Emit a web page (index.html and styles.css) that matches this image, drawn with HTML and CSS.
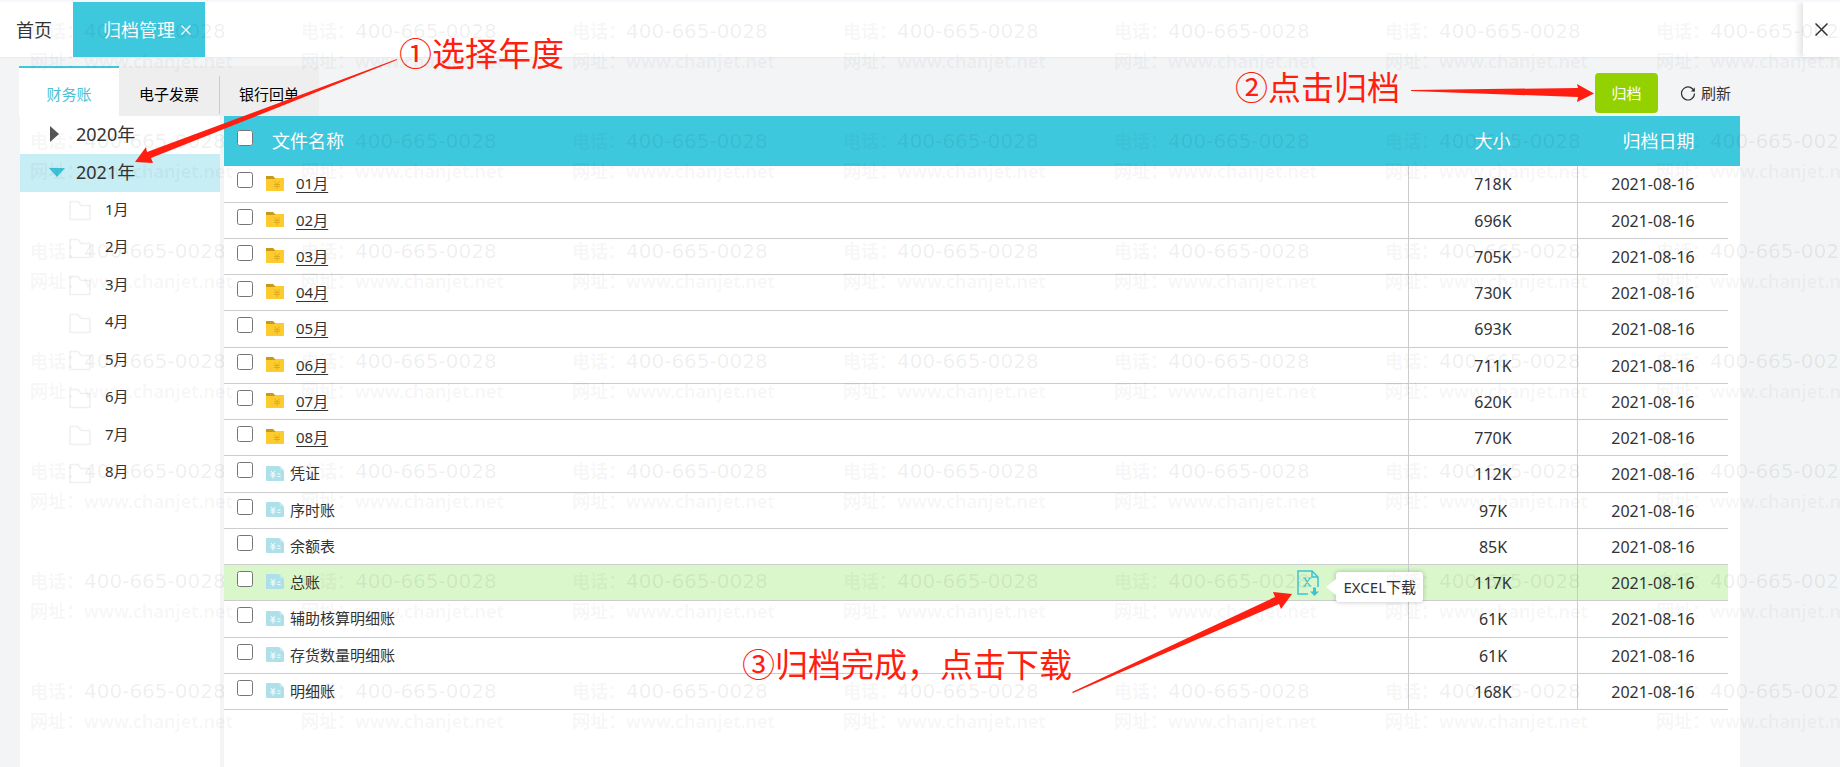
FILE: index.html
```
<!DOCTYPE html>
<html lang="zh-CN">
<head>
    <meta charset="UTF-8">
    <meta name="viewport" content="width=device-width, initial-scale=1.0">
    <title>归档管理</title>
    <link rel="stylesheet" href="styles.css">
</head>
<body>
    <!-- Icons -->
    <svg class="sprite" aria-hidden="true">
        <symbol id="icon-folder" viewBox="0 0 18 15">
            <path d="M0 0h7l2 2h8a1 1 0 0 1 1 1v4H0z" fill="#c79a1a"/>
            <path d="M0 3h8l2-1h7a1 1 0 0 1 1 1v11a1 1 0 0 1-1 1H1a1 1 0 0 1-1-1z" fill="#fdcb2e"/>
            <path d="M8.500 5.500l2.500 3 2.500-3M8 8.500h6M8 10.500h6M11 8v5" fill="none" stroke="#dba91f" stroke-width="0.900"/>
        </symbol>
        <symbol id="icon-file" viewBox="0 0 18 15">
            <path d="M1 0h12l5 5v9a1 1 0 0 1-1 1H1a1 1 0 0 1-1-1V1a1 1 0 0 1 1-1z" fill="#aee0ea"/>
            <path d="M14 0l4 4h-4z" fill="#c4eaf1"/>
            <path d="M5 5l2 2.500L9 5M4.500 8h5M4.500 10h5M7 7.500v5M11.500 8h3M11.500 10.500h3" fill="none" stroke="#fff" stroke-width="0.900"/>
        </symbol>
        <symbol id="icon-month" viewBox="0 0 22 21">
            <path d="M1 19.500v-18h8l3 4h9v14z" fill="none" stroke="#f0f0f0" stroke-width="1.500"/>
        </symbol>
    </svg>

    <!-- Top tabs -->
    <header class="topbar">
        <a class="home-tab" href="#">首页</a>
        <div class="page-tab">
            <span>归档管理</span>
            <button class="tab-close" type="button" aria-label="关闭标签">
                <svg width="10" height="10" viewBox="0 0 10 10"><path d="M0.500 0.500l9 9M9.500 0.500l-9 9" fill="none" stroke="#fff" stroke-width="1.200"/></svg>
            </button>
        </div>
        <button class="close-all" type="button" aria-label="关闭">
            <svg width="13" height="13" viewBox="0 0 13 13"><path d="M0.500 0.500l12 12M12.500 0.500l-12 12" fill="none" stroke="#333" stroke-width="1.500"/></svg>
        </button>
    </header>

    <div class="page">
        <div class="toolbar">
            <nav class="sub-tabs">
                <a class="sub-tab active" href="#">财务账</a>
                <a class="sub-tab" href="#">电子发票</a>
                <a class="sub-tab" href="#">银行回单</a>
            </nav>
            <div class="actions">
                <button class="archive-btn" type="button">归档</button>
                <button class="refresh-btn" type="button">
                    <svg width="16" height="16" viewBox="0 0 16 16">
                        <path d="M14.200 6.500A6.500 6.500 0 1 0 14.500 8.500" fill="none" stroke="#333" stroke-width="1.200"/>
                        <path d="M14.800 2.500v4h-4z" fill="#333"/>
                    </svg>
                    刷新
                </button>
            </div>
        </div>

        <div class="content">
            <!-- Year tree -->
            <aside class="sidebar">
                <div class="year">
                    <svg width="20" height="18" viewBox="0 0 20 18"><path d="M2 1l9 8-9 8z" fill="#555"/></svg>
                    2020年
                </div>
                <div class="year open">
                    <svg width="20" height="18" viewBox="0 0 20 18"><path d="M1 5h16l-8 9z" fill="#3dc2d6"/></svg>
                    2021年
                </div>
                <ul class="months" id="months"></ul>
            </aside>

            <main class="files">
                <table>
                    <colgroup>
                        <col>
                        <col class="col-size">
                        <col class="col-date">
                        <col class="col-scroll">
                    </colgroup>
                    <thead>
                        <tr>
                            <th class="name-head">
                                <div class="name">
                                    <input type="checkbox" aria-label="全选">
                                    <span>文件名称</span>
                                </div>
                            </th>
                            <th>大小</th>
                            <th colspan="2">归档日期</th>
                        </tr>
                    </thead>
                    <tbody id="rows"></tbody>
                </table>
            </main>
        </div>
    </div>

    <div class="watermark" id="watermark" aria-hidden="true"></div>

    <!-- Guide steps -->
    <div class="guide">
        <svg class="arrows" aria-hidden="true">
            <path d="M397 59L147 152l-1-5-11 15 18 1-2-5L397 60z"/>
            <path d="M1411 90l167-2-1-4 17 9.500-17 8.500 1-5-167-6z"/>
            <path d="M1072 692l203-95-2-5 19 2-11 15-2-5-206 89z"/>
        </svg>
        <p class="step step-year">①选择年度</p>
        <p class="step step-archive">②点击归档</p>
        <p class="step step-download">③归档完成，点击下载</p>
    </div>

    <script src="script.js"></script>
</body>
</html>
```
FILE: styles.css
```
* { box-sizing: border-box; margin: 0; padding: 0; }
body {
    display: flex; flex-direction: column; min-height: 100vh; position: relative; overflow-x: hidden;
    background: #f2f4f6; border-top: 2px solid #f6f7fd; color: #333;
    font-family: "Noto Sans", "Noto Sans CJK SC", sans-serif; font-size: 15px; line-height: 20px;
}
a { color: inherit; text-decoration: none; }
button { font: inherit; color: inherit; border: none; background: none; cursor: pointer; }
svg { display: block; flex: none; }
.sprite { position: absolute; width: 0; height: 0; }

/* Top bar */
.topbar { display: flex; height: 56px; background: #fff; border-bottom: 1px solid #e9ebed; font-size: 18px; }
.home-tab { display: flex; align-items: center; padding: 0 21px 0 16px; }
.page-tab { display: flex; align-items: center; gap: 6px; width: 132px; padding-left: 30px; background: #3ec8de; color: #fff; }
.close-all {
    display: flex; align-items: center; justify-content: center; width: 37px; margin-left: auto;
    box-shadow: -4px 0 6px rgba(0, 0, 0, 0.1); background: #fff;
}

/* Page */
.page { display: flex; flex-direction: column; flex: 1; padding: 8px 100px 0 19px; }
.toolbar { display: flex; justify-content: space-between; height: 50px; }
.sub-tabs { display: flex; background: #eee; }
.sub-tab {
    display: flex; align-items: center; justify-content: center; width: 100px; padding-top: 4px;
    border-top: 2px solid transparent; color: #000;
}
.sub-tab.active { background: #fff; border-top-color: #3ec8de; color: #4cc0d4; }
.sub-tab + .sub-tab + .sub-tab { background: linear-gradient(#ccc, #ccc) 0 8px / 1px 38px no-repeat; }

.actions { display: flex; align-items: center; gap: 22px; padding: 4px 9px 0 0; }
.archive-btn { width: 63px; height: 40px; border-radius: 4px; background: #94d100; color: #fff; }
.refresh-btn { display: flex; align-items: center; gap: 5px; }

/* Year tree */
.content { display: flex; flex: 1; gap: 4px; padding-left: 1px; }
.sidebar { width: 200px; background: #fff; }
.year { display: flex; align-items: center; gap: 8px; height: 38px; padding: 0 0 2px 28px; font-size: 18px; }
.year.open { background: #c7eef4; }
.months { display: grid; height: 300px; grid-auto-rows: 1fr; list-style: none; }
.months li { display: flex; align-items: center; gap: 14px; padding: 0 0 4px 49px; }
.months svg { margin-top: 4px; }

/* File list */
.files { flex: 1; min-width: 0; background: #fff; }
table { width: 100%; table-layout: fixed; border-collapse: separate; border-spacing: 0; }
.col-size { width: 169px; }
.col-date { width: 151px; }
.col-scroll { width: 12px; }
th { height: 50px; background: #3ec8de; color: #fff; font-size: 18px; font-weight: normal; text-align: center; }
td { height: 36px; border-bottom: 1px solid #ccc; text-align: center; }
tbody tr:nth-child(4n + 1) td { height: 37px; }
td + td { border-left: 1px solid #ccc; font-size: 16px; }
td:last-child { border: none; }
tr.current td { background: #d9f7cb; }
tr.current td:last-child { background: none; }
.name { display: flex; align-items: center; position: relative; padding: 0 0 2px 13px; }
.name input { width: 16px; height: 16px; margin-bottom: 6px; }
.name-head .name { padding-bottom: 0; }
.name-head span { margin-left: 19px; }
.name svg { margin-left: 13px; }
.name label { margin-left: 6px; }
.name a { margin-left: 12px; text-decoration: underline; text-underline-offset: 3px; }

/* Excel download */
.download { margin: 0 89px 0 auto; }
.name .download svg { margin: 4px 0 0; }
.tooltip {
    position: absolute; right: -15px; top: 50%; margin-top: -11px; padding: 5px 7px; z-index: 1;
    border-radius: 3px; background: #fff; box-shadow: 0 0 5px rgba(0, 0, 0, 0.25);
}
.tooltip::before {
    content: ""; position: absolute; left: -10px; top: 7px;
    border: 8px solid transparent; border-right: 10px solid #fff; border-left: none;
}

/* Contact watermark */
.watermark {
    position: absolute; inset: 14px 0 0 30px; z-index: 2; overflow: hidden; pointer-events: none;
    display: grid; grid-template-columns: repeat(7, 271px); grid-auto-rows: 110px;
    color: rgba(0, 0, 0, 0.05); font-size: 18px; font-weight: 600; line-height: 30px;
}
.phone { font-family: "DejaVu Sans", sans-serif; font-weight: normal; font-size: 20px; color: rgba(0, 0, 0, 0.07); }

/* Guide */
.guide { position: absolute; inset: -2px 0 0; z-index: 3; overflow: hidden; pointer-events: none; color: #ff1e10; }
.arrows { width: 100%; height: 100%; fill: #ff1e10; }
.step { position: absolute; font-size: 33px; line-height: 40px; white-space: nowrap; }
.step-year { left: 399px; top: 34px; }
.step-archive { left: 1235px; top: 68px; }
.step-download { left: 742px; top: 645px; }
```
FILE: script.js
```
const DATE = "2021-08-16";
const files = [
    ["01月", "718K"], ["02月", "696K"], ["03月", "705K"], ["04月", "730K"],
    ["05月", "693K"], ["06月", "711K"], ["07月", "620K"], ["08月", "770K"],
    ["凭证", "112K"], ["序时账", "97K"], ["余额表", "85K"], ["总账", "117K"],
    ["辅助核算明细账", "61K"], ["存货数量明细账", "61K"], ["明细账", "168K"]
];

// Excel button and its tooltip, shown on the current row
const download = `
    <button class="download" type="button" aria-label="EXCEL下载">
        <svg width="22" height="27" viewBox="0 0 22 27">
            <path d="M11 24H1V1h14l6 6v10M15 1v6h6" fill="none" stroke="#3dc2d6" stroke-width="1.500"/>
            <path d="M6 8h3M11.500 8h3M6 16h3M11.500 16h3M7.500 8l5.500 8M13 8l-5.500 8" fill="none" stroke="#3dc2d6" stroke-width="1.200"/>
            <path d="M16 17.500h3v4h3L17.500 26 13 21.500h3z" fill="#3dc2d6"/>
        </svg>
    </button>
    <span class="tooltip">EXCEL下载</span>`;

document.getElementById("rows").innerHTML = files.map(([name, size], i) => {
    const isFolder = i < 8;
    const isCurrent = name === "总账";
    return `
    <tr class="${isCurrent ? "current" : ""}">
        <td>
            <div class="name">
                <input type="checkbox" id="file${i}" aria-label="${name}">
                <svg width="18" height="15"><use href="#${isFolder ? "icon-folder" : "icon-file"}"/></svg>
                ${isFolder ? `<a href="#">${name}</a>` : `<label for="file${i}">${name}</label>`}
                ${isCurrent ? download : ""}
            </div>
        </td>
        <td>${size}</td>
        <td>${DATE}</td>
        <td></td>
    </tr>`;
}).join("");

let months = "";
for (let m = 1; m <= 8; m++) {
    months += `<li><svg width="22" height="21"><use href="#icon-month"/></svg>${m}月</li>`;
}
document.getElementById("months").innerHTML = months;

document.getElementById("watermark").innerHTML =
    `<div>电话：<span class="phone">400-665-0028</span><br>网址：www.chanjet.net</div>`.repeat(49);
```
